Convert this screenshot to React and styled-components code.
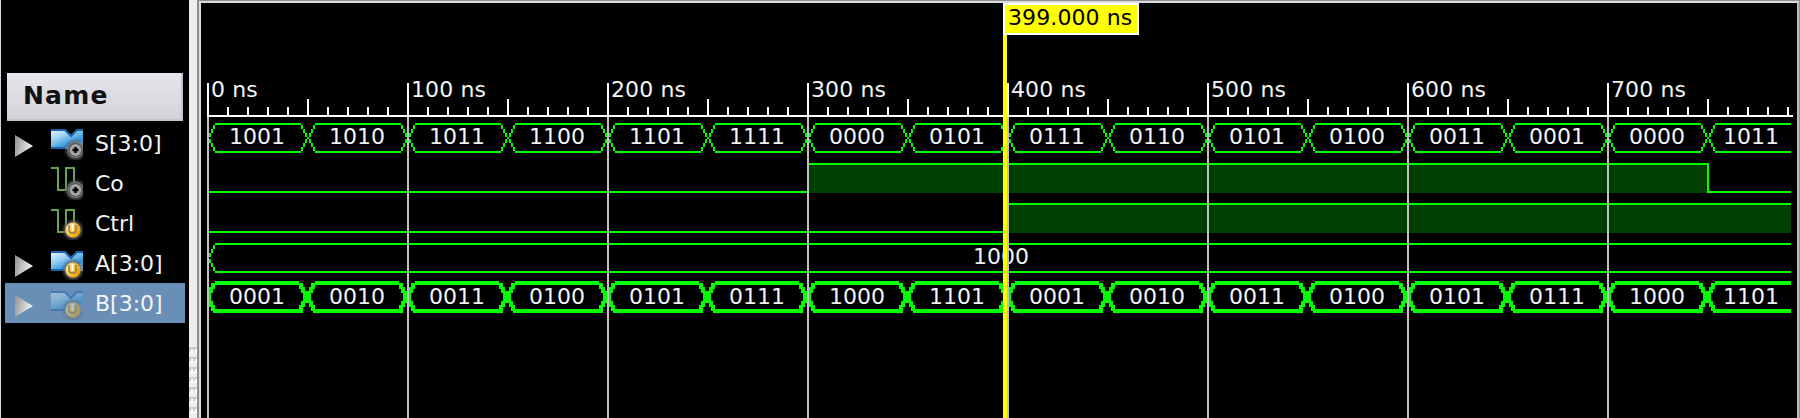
import React from "react";
import styled, { createGlobalStyle, css } from "styled-components";

const Global = createGlobalStyle`
  * { box-sizing: border-box; }
  html, body { margin: 0; background: #000; overflow: hidden; }
`;

const font = css`font-family: "DejaVu Sans", sans-serif; font-size: 22px; line-height: 26px; white-space: pre;`;

const Viewer = styled.div`
  ${font}
  display: flex;
  width: 1800px;
  height: 418px;
  overflow: hidden;
  background: #000;
  color: #f4f4f4;
`;

const NamePanel = styled.aside`
  width: 189px;
  flex: none;
  border-left: 1px solid #cfd4d8;
  padding: 73px 4px 0;
`;

const NameHeader = styled.div`
  height: 48px;
  width: 176px;
  margin: 0 0 2px 2px;
  padding: 9px 0 0 16px;
  background: linear-gradient(#e6e6ec, #d2d2d8);
  border-right: 2px solid #c4c4ca;
  border-bottom: 2px solid #c4c4ca;
  color: #111;
  font-weight: bold;
  font-size: 25px;
  line-height: 28px;
  letter-spacing: 1.2px;
`;

const SignalRow = styled.div`
  display: flex;
  align-items: center;
  width: 180px;
  height: 40px;
  padding-left: 10px;
  background: ${(p) => (p.$selected ? "#6a8fb7" : "transparent")};
`;

const ArrowSlot = styled.span`
  display: flex;
  width: 36px;
  flex: none;
  padding-top: 6px;
`;

const IconSlot = styled.span`
  display: flex;
  width: 44px;
  flex: none;
  opacity: ${(p) => (p.$faded ? 0.5 : 1)};
`;

const SignalName = styled.span`
  padding-top: 1px;
`;

const Splitter = styled.div`
  display: flex;
  width: 8px;
  flex: none;
  flex-direction: column;
  padding-top: 347px;
  gap: 4px;
  background: #eee;
`;

const Grip = styled.i`
  display: block;
  flex: none;
  height: 6px;
  background:
    linear-gradient(90deg, transparent 2px, #fff 2px 4px, transparent 4px 6px, #fff 6px) 0 2px / 8px 4px no-repeat,
    linear-gradient(#cbcbcb 4px, transparent 4px);
`;

const WavePanel = styled.main`
  flex: 1;
  height: 418px;
  border-left: 2px solid #8f8f8f;
  border-top: 1px solid #8f8f8f;
  border-right: 1px solid #8f8f8f;
`;

const WaveFrame = styled.div`
  position: relative;
  height: 417px;
  border: 2px solid #dcdcdc;
  border-bottom: 0;
  border-right-color: #bcbcbc;
  padding: 80px 0 0 6px;
`;

const Ruler = styled.div`
  display: flex;
  width: 1586px;
  height: 34px;
  border-bottom: 2px solid #fff;
`;

const RulerCell = styled.div`
  position: relative;
  width: 200px;
  flex: none;
  margin-top: -6px;
  padding-left: 4px;
  letter-spacing: 0.1px;
`;

const Tracks = styled.div`
  position: relative;
  width: 1584px;
  height: 301px;
  padding-top: 6px;
`;

const Track = styled.div`
  position: relative;
  display: flex;
  height: 40px;
`;

const Drawing = styled.svg`
  position: absolute;
  inset: ${(p) => p.$top || 0}px 0 0 0;
  overflow: visible;
  shape-rendering: crispEdges;
`;

const BusValue = styled.span`
  position: relative;
  width: ${(p) => p.$w}px;
  flex: none;
  padding-top: 1px;
  text-align: center;
`;

const Cursor = styled.div`
  position: absolute;
  left: 802px;
  top: 0;
  width: 4px;
  height: 415px;
  background: #ff0;
`;

const CursorLabel = styled.div`
  position: absolute;
  left: 802px;
  top: 0;
  width: 136px;
  height: 32px;
  padding: 0 0 0 3px;
  border: 2px solid #fff;
  background: #ff0;
  color: #000;
  letter-spacing: 0.1px;
`;

const END = 1584;

function cell(x, y, w, h) {
  const l = Math.max(x, 0);
  const r = Math.min(x + w, END);
  return r > l ? `M${l} ${y}H${r}V${y + h}H${l}Z` : "";
}

// Bus outline on a two-pixel grid: rails joined by stepped crossings.
// A thick outline widens the pen by one grid cell up and to the left.
function busPath(edges, thick) {
  const g = thick ? 2 : 0;
  const pen = (x, y, w, h) => cell(x - g, y - g, w + g, h + g);
  let d = "";
  edges.forEach((e, i) => {
    const last = i + 1 === edges.length;
    const from = e + 8;
    const to = last ? END : edges[i + 1] - 6;
    const topEnd = last ? END : to - g;
    d += cell(from, -g, topEnd - from, 2 + g);
    d += cell(from - g, 28 - g, to - from + g * 2, 2 + g);
    (i === 0 ? [1] : [1, -1]).forEach((s) => {
      for (let k = 0; k < 3; k += 1) {
        const x = e + s * (6 - 2 * k);
        d += pen(x, 2 + 4 * k, 2, 4) + pen(x, 24 - 4 * k, 2, 4);
      }
    });
    d += pen(e, 14, 2, 2);
  });
  return d;
}

function Bus({ values, thick }) {
  const edges = values.map((_, i) => i * 100);
  return (
    <Track>
      <Drawing width={END} height={40}>
        <path d={busPath(edges, thick)} fill="#0f0" />
      </Drawing>
      {values.map((v, i) => (
        <BusValue key={i} $w={values.length === 1 ? 1588 : i === 15 ? 88 : 100}>{v}</BusValue>
      ))}
    </Track>
  );
}

function Logic({ rise, fall }) {
  const end = fall ?? END;
  return (
    <Track>
      <Drawing width={END} height={40}>
        <path d={`M${rise} 2H${end}V30H${rise}Z`} fill="#004000" />
        <path
          d={
            cell(0, 28, rise, 2) +
            cell(rise, 0, end - rise, 2) +
            cell(rise, 0, 2, 30) +
            (fall ? cell(fall, 0, 2, 30) + cell(fall, 28, END - fall, 2) : "")
          }
          fill="#0f0"
        />
      </Drawing>
    </Track>
  );
}

function Arrow() {
  return (
    <svg width="19" height="22" viewBox="0 0 19 22">
      <defs>
        <linearGradient id="arrow" x1="0" y1="0" x2="1" y2="0.3">
          <stop stopColor="#8f8f8f" />
          <stop offset="1" stopColor="#f2f2f2" />
        </linearGradient>
      </defs>
      <path d="M0 0L18 11L0 22Z" fill="url(#arrow)" />
    </svg>
  );
}

function SignalIcon({ bus, input }) {
  const cx = input ? 22 : 24.5;
  return (
    <svg width="32" height="34" viewBox="0 0 32 34">
      <defs>
        <linearGradient id="blue" x1="0" y1="0" x2=".7" y2="1">
          <stop stopColor="#eaf7fe" />
          <stop offset=".4" stopColor="#9bd3f3" />
          <stop offset=".8" stopColor="#2d92da" />
          <stop offset="1" stopColor="#7cc4ee" />
        </linearGradient>
        <linearGradient id="gold" x1="0" y1="0" x2="1" y2=".5">
          <stop stopColor="#fff0c0" />
          <stop offset=".5" stopColor="#f8c84a" />
          <stop offset="1" stopColor="#f0a000" />
        </linearGradient>
        <radialGradient id="halo">
          <stop stopColor="#aaa" />
          <stop offset=".6" stopColor="#777" stopOpacity=".85" />
          <stop offset="1" stopColor="#444" stopOpacity="0" />
        </radialGradient>
      </defs>
      <g transform={input ? "translate(0 2)" : undefined}>
        {bus ? (
          <g>
            <path d="M0 3H14L20 9L26 3H32V23H0Z" fill="url(#blue)" />
            <path d="M0 4H14L20 10L26 4H32M0 22H14" fill="none" stroke="#1f62ac" strokeWidth="2" />
          </g>
        ) : (
          <path d="M0 2H7V24H15V2H23V16" fill="none" stroke="#6aa352" strokeWidth="2" />
        )}
      </g>
      <circle cx={cx} cy="24" r="12" fill="url(#halo)" />
      {input ? (
        <g>
          <circle cx={cx} cy="24" r="7.5" fill="url(#gold)" />
          <path d="M18 19V24Q18 27 21.5 27Q25 27 25 24V19" fill="none" stroke="#8f7a4a" strokeWidth="1.4" />
          <path d="M21.5 18V25" fill="none" stroke="#fff" strokeWidth="2" />
        </g>
      ) : (
        <g>
          <circle cx={cx} cy="24" r="8" fill="#777" />
          <circle cx={cx} cy="24" r="6.5" fill="#a4a4a4" stroke="#505050" strokeWidth="1.2" />
          <path d="M24.5 21V27M21.5 24H27.5" stroke="#000" strokeWidth="2.4" />
        </g>
      )}
    </svg>
  );
}

const signals = [
  { name: "S[3:0]", bus: true },
  { name: "Co" },
  { name: "Ctrl", input: true },
  { name: "A[3:0]", bus: true, input: true },
  { name: "B[3:0]", bus: true, input: true, selected: true },
];

const sum = "1001 1010 1011 1100 1101 1111 0000 0101 0111 0110 0101 0100 0011 0001 0000 1011".split(" ");
const b = "0001 0010 0011 0100 0101 0111 1000 1101 0001 0010 0011 0100 0101 0111 1000 1101".split(" ");

export default function App() {
  return (
    <Viewer>
      <Global />
      <NamePanel>
        <NameHeader>Name</NameHeader>
        {signals.map((s) => (
          <SignalRow key={s.name} $selected={s.selected}>
            <ArrowSlot>{s.bus && <Arrow />}</ArrowSlot>
            <IconSlot $faded={s.selected}><SignalIcon bus={s.bus} input={s.input} /></IconSlot>
            <SignalName>{s.name}</SignalName>
          </SignalRow>
        ))}
      </NamePanel>
      <Splitter>{Array.from({ length: 7 }, (_, i) => <Grip key={i} />)}</Splitter>
      <WavePanel>
        <WaveFrame>
          <Ruler>
            {Array.from({ length: 8 }, (_, i) => (
              <RulerCell key={i}>
                <Drawing $top={6} width={200} height={32}>
                  {Array.from({ length: 10 }, (_, k) => {
                    const y = k === 0 ? 0 : k === 5 ? 16 : 24;
                    return <rect key={k} x={k * 20} y={y} width="2" height={32 - y} fill="#fff" />;
                  })}
                </Drawing>
                {i * 100} ns
              </RulerCell>
            ))}
          </Ruler>
          <Tracks>
            <Bus values={sum} />
            <Logic rise={600} fall={1500} />
            <Logic rise={800} />
            <Bus values={["1000"]} />
            <Bus values={b} thick />
            <Drawing width={END} height={301}>
              {Array.from({ length: 8 }, (_, i) => (
                <rect key={i} x={i * 200} width="2" height="301" fill="#c0c0c0" />
              ))}
            </Drawing>
          </Tracks>
          <Cursor />
          <CursorLabel>399.000 ns</CursorLabel>
        </WaveFrame>
      </WavePanel>
    </Viewer>
  );
}
